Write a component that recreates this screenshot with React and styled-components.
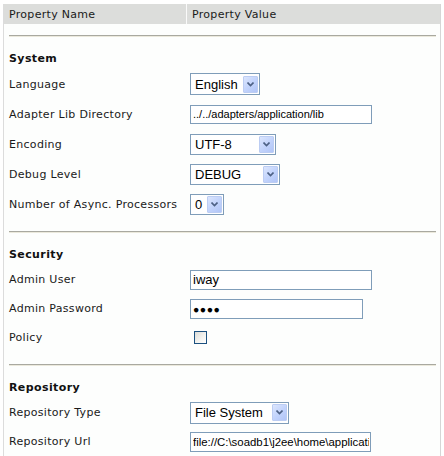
import React from 'react';
import styled, { createGlobalStyle } from 'styled-components';

const GlobalStyle = createGlobalStyle`
    body {
        margin: 0;
        background: #ffffff;
        font-family: "DejaVu Sans", Verdana, sans-serif;
    }
`;

const Frame = styled.div`
    margin: 4px 0 0 3px;
    width: 436px;
    border-left: 1px solid #dcdcdc;
    border-right: 1px solid #d6d6d6;
    background: #fdfefd;
    min-height: 452px;
`;

const Header = styled.div`
    display: flex;
    height: 20px;
    background: #dcdddb;
    font-size: 11px;
    letter-spacing: 0.3px;
    color: #1a1a1a;
`;

const HeaderCell = styled.div`
    width: ${(props) => props.width || 'auto'};
    flex: ${(props) => props.width ? 'none' : 1};
    display: flex;
    align-items: center;
    padding-left: 5px;
    box-sizing: border-box;
    border-right: ${(props) => props.divider ? '1px solid #fafafa' : 'none'};
`;

const Section = styled.div`
    padding-top: ${(props) => props.first ? '11px' : '0'};
    padding-bottom: 12px;
`;

const Divider = styled.div`
    margin: 0 4px 0 5px;
    height: 1px;
    border-top: 1px solid #a9a9a0;
    background: #ebe9dc;
`;

const Heading = styled.div`
    margin-top: 10px;
    height: 22px;
    display: flex;
    align-items: center;
    padding-left: 5px;
    font-size: 11px;
    font-weight: bold;
    letter-spacing: 0.4px;
    color: #111;
`;

const Row = styled.div`
    display: flex;
    align-items: center;
    height: ${(props) => props.h}px;
`;

const Label = styled.div`
    width: 186px;
    padding-left: 5px;
    box-sizing: border-box;
    font-size: 11px;
    letter-spacing: 0.3px;
    color: #1a1a1a;
    white-space: nowrap;
`;

const SelectBox = styled.div`
    width: ${(props) => props.width}px;
    height: ${(props) => props.height || 22}px;
    box-sizing: border-box;
    border: 1px solid #7f9db9;
    background: #fff;
    display: flex;
    align-items: center;
    padding: 0 1px 0 4px;
    font-family: "Liberation Sans", Arial, sans-serif;
    font-size: 13px;
    color: #000;
`;

const SelectText = styled.span`
    flex: 1;
    white-space: nowrap;
`;

const ArrowButton = styled.span`
    width: 15px;
    height: 17px;
    box-sizing: border-box;
    border: 1px solid #bccdf3;
    border-radius: 1px;
    background: linear-gradient(135deg, #dce6fd 0%, #c3d4fc 50%, #b1c5f7 100%);
    display: flex;
    align-items: center;
    justify-content: center;
`;

const TextInput = styled.input`
    width: ${(props) => props.width}px;
    height: ${(props) => props.height}px;
    box-sizing: border-box;
    border: 1px solid #7f9db9;
    background: #fff;
    padding: 0 1px 0 2px;
    margin: 0;
    font-family: "Liberation Sans", Arial, sans-serif;
    font-size: ${(props) => props.size || 11}px;
    letter-spacing: ${(props) => props.spacing || 0}px;
    color: #000;
    outline: none;
`;

const CheckBox = styled.span`
    margin-left: 4px;
    width: 13px;
    height: 13px;
    box-sizing: border-box;
    border: 1px solid #1c5180;
    background: linear-gradient(135deg, #dcdcd7 0%, #f4f4f1 60%, #ffffff 100%);
`;

function Chevron() {
    return (
        <svg width="7" height="5" viewBox="0 0 7 5">
            <path d="M0.5 0.5 L3.5 3.5 L6.5 0.5" fill="none" stroke="#4d6185" strokeWidth="1.6" />
        </svg>
    );
}

function Select({ value, width, height }) {
    return (
        <SelectBox width={width} height={height}>
            <SelectText>{value}</SelectText>
            <ArrowButton><Chevron /></ArrowButton>
        </SelectBox>
    );
}

const sections = [
    {
        title: 'System',
        h: 30,
        rows: [
            { label: 'Language', select: 'English', width: 70 },
            { label: 'Adapter Lib Directory', input: '../../adapters/application/lib', width: 182, height: 19 },
            { label: 'Encoding', select: 'UTF-8', width: 86, height: 21 },
            { label: 'Debug Level', select: 'DEBUG', width: 90, height: 21 },
            { label: 'Number of Async. Processors', select: '0', width: 34, height: 21 },
        ],
    },
    {
        title: 'Security',
        h: 29,
        rows: [
            { label: 'Admin User', input: 'iway', width: 182, height: 20, size: 13 },
            { label: 'Admin Password', input: '\u25CF\u25CF\u25CF\u25CF', width: 173, height: 20, size: 10.5, spacing: 0.5 },
            { label: 'Policy', check: true },
        ],
    },
    {
        title: 'Repository',
        h: 29,
        rows: [
            { label: 'Repository Type', select: 'File System', width: 99, height: 22 },
            { label: 'Repository Url', input: 'file://C:\\soadb1\\j2ee\\home\\application', width: 181, height: 20, size: 11.4 },
        ],
    },
];

export default function App() {
    return (
        <>
            <GlobalStyle />
            <Frame>
                <Header>
                    <HeaderCell width="183px" divider>Property Name</HeaderCell>
                    <HeaderCell>Property Value</HeaderCell>
                </Header>
                {sections.map((section, i) => (
                    <Section key={section.title} first={i === 0}>
                        <Divider />
                        <Heading>{section.title}</Heading>
                        {section.rows.map((row) => (
                            <Row key={row.label} h={section.h}>
                                <Label>{row.label}</Label>
                                {row.select && <Select value={row.select} width={row.width} height={row.height} />}
                                {row.input && (
                                    <TextInput
                                        readOnly
                                        value={row.input}
                                        width={row.width}
                                        height={row.height}
                                        size={row.size}
                                        spacing={row.spacing}
                                    />
                                )}
                                {row.check && <CheckBox />}
                            </Row>
                        ))}
                    </Section>
                ))}
            </Frame>
        </>
    );
}
